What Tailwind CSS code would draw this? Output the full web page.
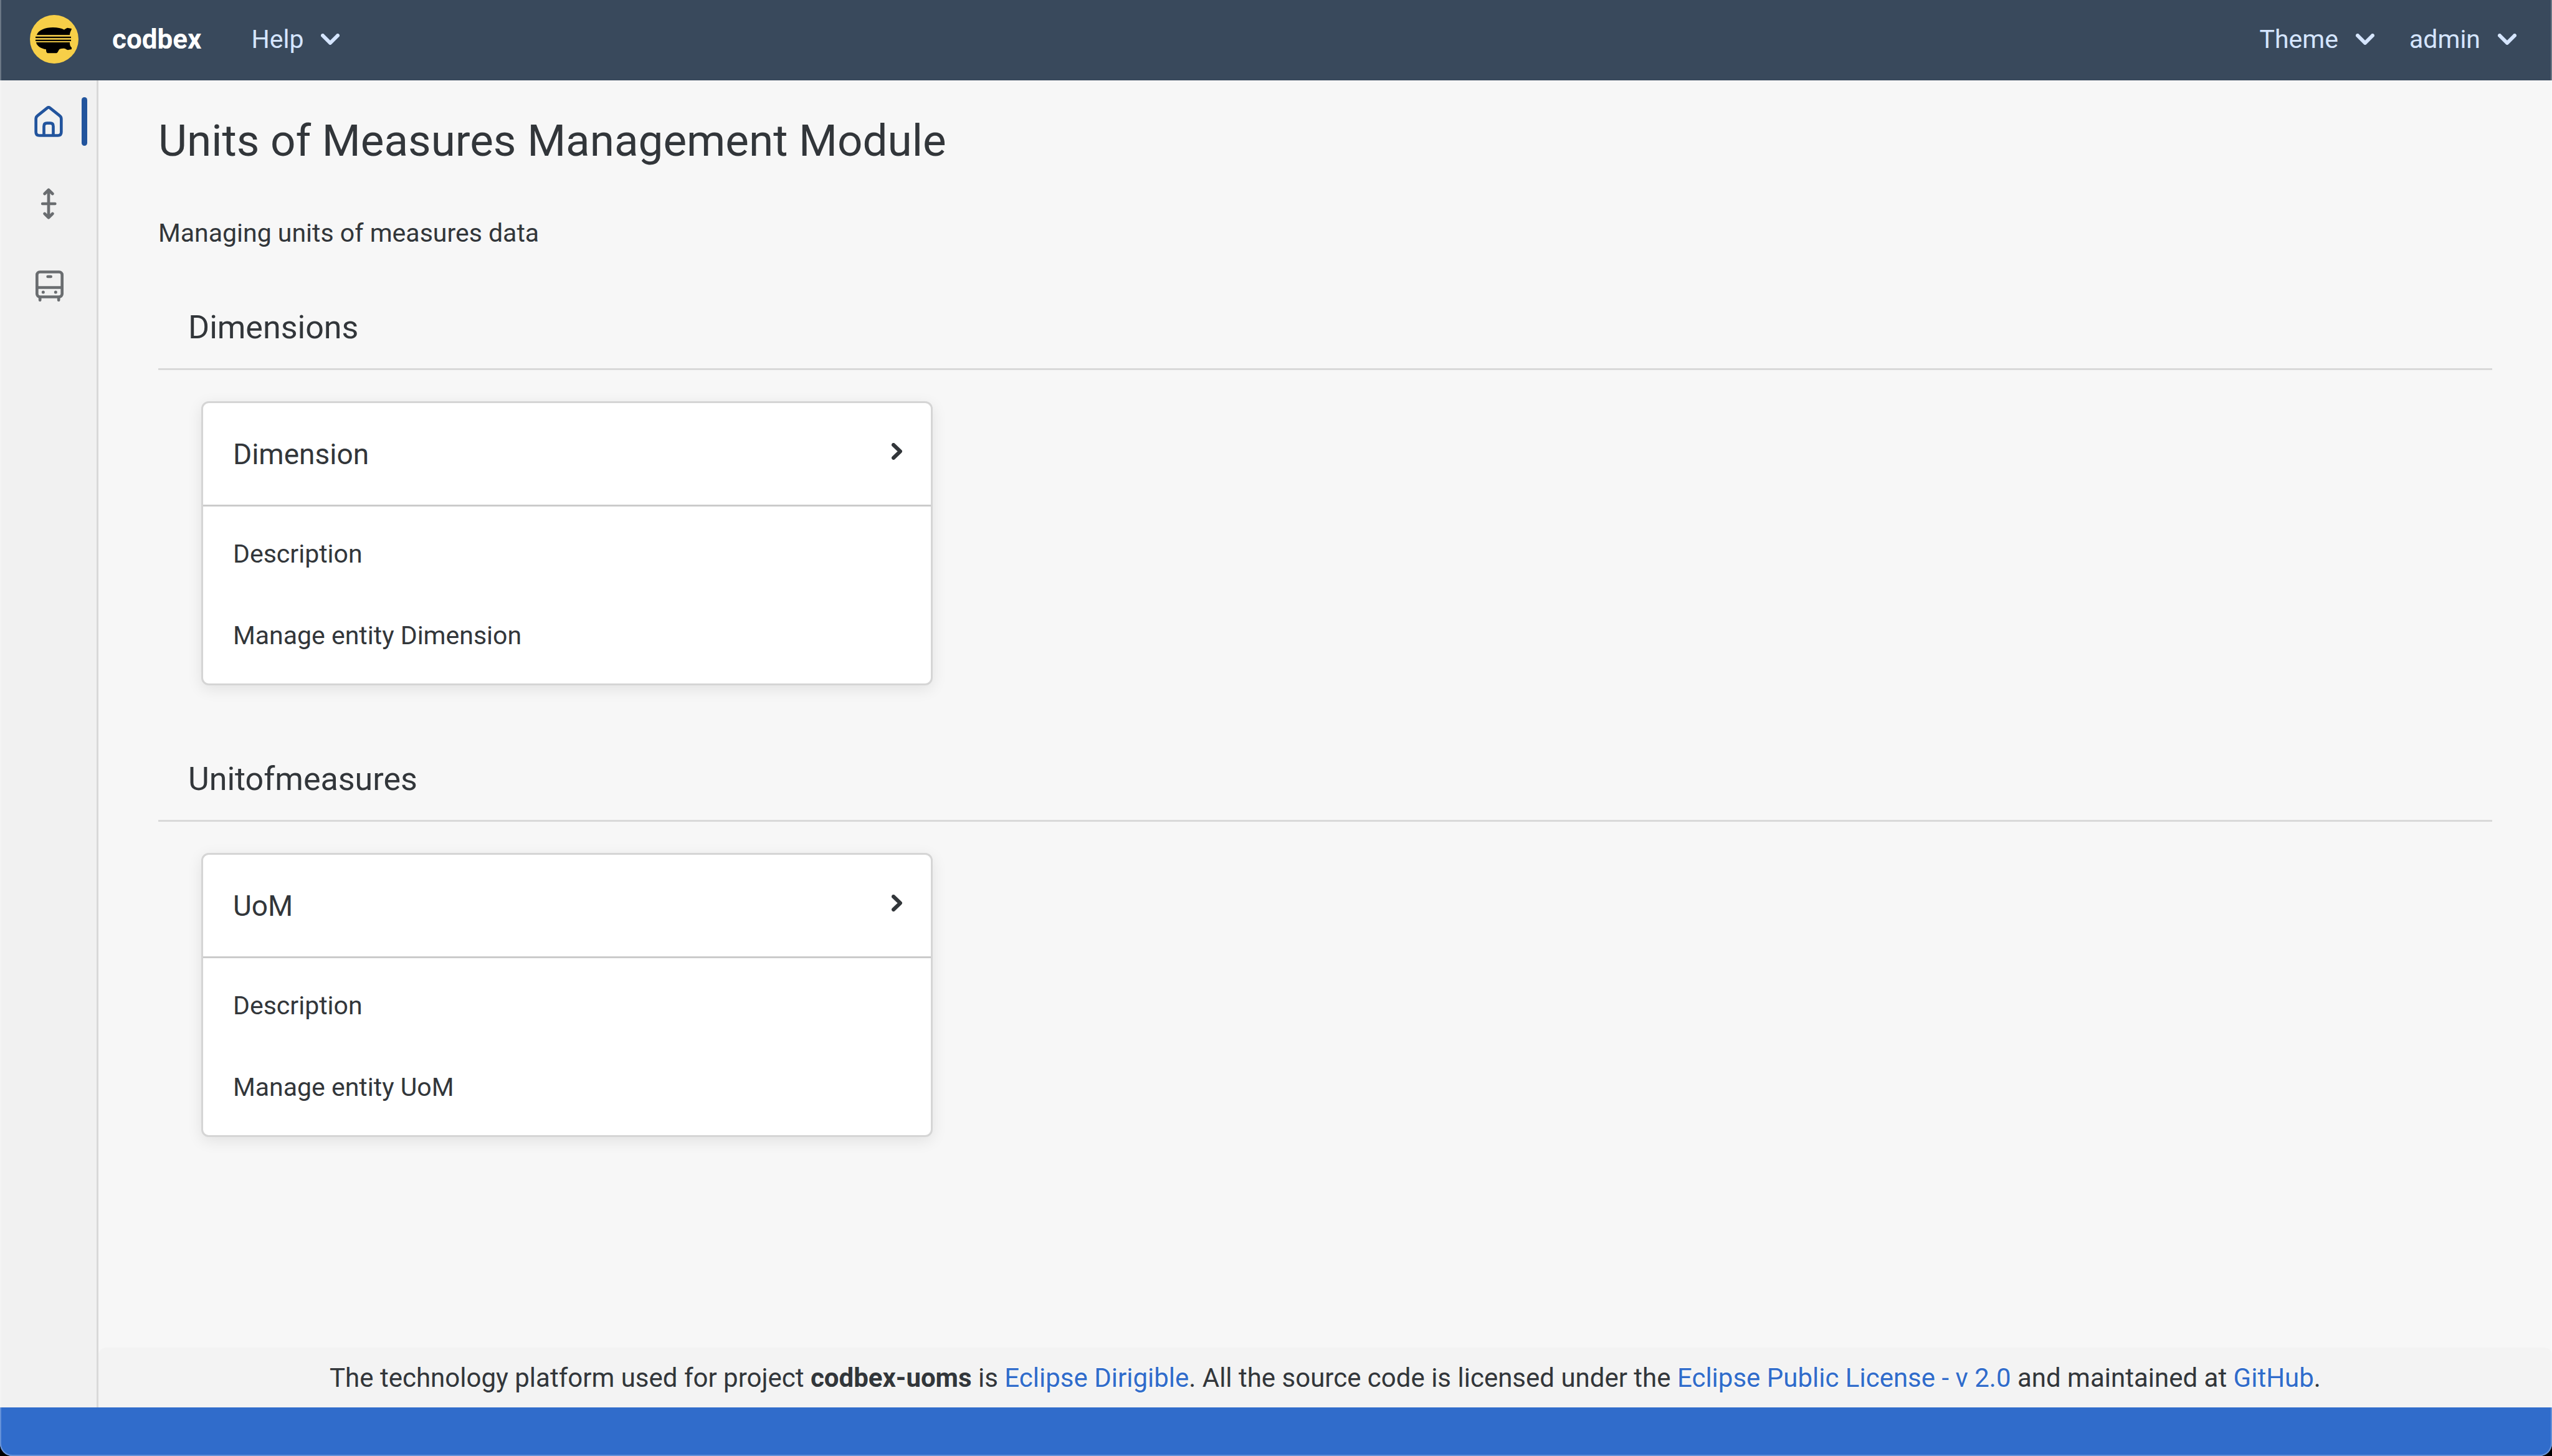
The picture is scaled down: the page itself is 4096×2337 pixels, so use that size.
<!DOCTYPE html>
<html lang="en">
<head>
<meta charset="utf-8">
<meta name="viewport" content="width=device-width, initial-scale=1">
<title>Units of Measures Management Module</title>
<script src="https://cdn.jsdelivr.net/npm/@tailwindcss/browser@4"></script>
</head>
<body class="bg-black font-['Roboto',sans-serif] text-[41px] leading-[60px] text-[#32363a]">
<div class="relative flex min-h-screen flex-col overflow-hidden rounded-b-[20px] bg-[#f7f7f7]">

  <!-- Shell bar -->
  <header class="flex h-[129px] shrink-0 items-center justify-between bg-[#39495c] pr-[57px] pb-[3px] pl-12 text-[#d5e5ff]">
    <div class="flex items-center gap-20">
      <a href="#" class="flex items-center gap-[54px]">
        <svg class="size-[78px]" viewBox="24 30 234 234" role="img" aria-label="codbex logo">
          <circle cx="141" cy="147" r="117" fill="#f7cf48"/>
          <path d="M57 126C63 104 98 90 135 90C158 90 175 94 189 101C195 97 199 93 205 92L225 96C224 104 217 110 216 126Z"/>
          <path d="M51 134.500H222V141H51ZM51 149.500H222V156H51Z"/>
          <path d="M55 128.500H216M52 145.500H221M55 159.500H216" stroke="#8a7434" stroke-width="1" fill="none"/>
          <path d="M54 162H216C216 178 219 182 225 187V195L207 199C199 197 195 191 187 191C177 192 168 191 164 198C160 204 158 212 152 213.500H109C103 212 102 206 102 196C78 192 57 180 54 162Z"/>
        </svg>
        <span class="text-[44px] font-bold text-white">codbex</span>
      </a>
      <button type="button" class="flex items-center gap-7">Help
        <svg class="h-[18px] w-[30px]" viewBox="0 0 30 18" fill="none" stroke="currentColor" stroke-width="6" stroke-linecap="round" stroke-linejoin="round"><path d="M3 3L15 15L27 3"/></svg>
      </button>
    </div>
    <div class="flex items-center gap-14">
      <button type="button" class="flex items-center gap-7">Theme
        <svg class="h-[18px] w-[30px]" viewBox="0 0 30 18" fill="none" stroke="currentColor" stroke-width="6" stroke-linecap="round" stroke-linejoin="round"><path d="M3 3L15 15L27 3"/></svg>
      </button>
      <button type="button" class="flex items-center gap-7">admin
        <svg class="h-[18px] w-[30px]" viewBox="0 0 30 18" fill="none" stroke="currentColor" stroke-width="6" stroke-linecap="round" stroke-linejoin="round"><path d="M3 3L15 15L27 3"/></svg>
      </button>
    </div>
  </header>

  <div class="flex grow">
    <!-- Side navigation -->
    <nav class="w-[158px] shrink-0 border-r-[3px] border-[#d9d9d9] bg-[#f1f1f1] text-[#6a6d70]" aria-label="Main">
      <a href="#" aria-label="Home" aria-current="page" class="relative flex h-[132px] items-center justify-center text-[#22549d]">
        <svg class="size-[50px]" viewBox="39 93 150 150" fill="none" stroke="currentColor" stroke-width="14" stroke-linecap="round" stroke-linejoin="round">
          <path d="M107 103Q114 97 121 103L167 140Q175 146 175 155V219Q175 235.500 159 235.500H69Q53 235.500 53 219V155Q53 146 61 140Z"/>
          <path d="M91.500 234V191Q91.500 176 106 176H122Q136.500 176 136.500 191V234"/>
        </svg>
        <span class="absolute right-[15px] h-[78px] w-[9px] rounded-full bg-[#22549d]"></span>
      </a>
      <a href="#" aria-label="Dimensions" class="flex h-[132px] items-center justify-center">
        <svg class="size-[50px]" viewBox="39 489 150 150" fill="none" stroke="currentColor" stroke-width="14" stroke-linecap="round" stroke-linejoin="round">
          <path d="M114 500V628M84.500 564H145M95 516L114 497L133 516M95 612L114 631L133 612"/>
          <path d="M106 503L114 496L122 503ZM106 625L114 632L122 625Z" fill="currentColor" stroke="none"/>
        </svg>
      </a>
      <a href="#" aria-label="Unitofmeasures" class="flex h-[132px] items-center justify-center">
        <svg class="size-[50px]" viewBox="39 885 150 150" fill="none" stroke="currentColor" stroke-width="14" stroke-linecap="round" stroke-linejoin="round">
          <rect x="58" y="892.500" width="121" height="120" rx="14"/>
          <path d="M58 967.500H179M72.500 1014V1028M162.500 1014V1028M110 915H125"/>
          <circle cx="88" cy="990" r="7.500" fill="currentColor" stroke="none"/>
          <circle cx="148" cy="990" r="7.500" fill="currentColor" stroke="none"/>
        </svg>
      </a>
    </nav>

    <div class="flex grow flex-col">
      <main class="grow px-24 pt-[57px]">
        <h1 class="text-[71px] leading-[80px]">Units of Measures Management Module</h1>
        <p class="mt-[78px]">Managing units of measures data</p>

        <section class="mt-[92px]">
          <h2 class="border-b-[3px] border-[#d9d9d9] pb-[35px] pl-12 text-[52px]">Dimensions</h2>
          <article class="mt-[50px] ml-[69px] w-[1174px] max-w-full rounded-[12px] border-[3px] border-[#d5d5d5] bg-white shadow-[0_6px_24px_rgba(0,0,0,0.09)]">
            <a href="#" class="flex h-[166px] items-center justify-between border-b-[3px] border-[#cbcbcb] pr-[46px] pl-12">
              <h3 class="text-[46px]">Dimension</h3>
              <svg class="mb-2 h-[27px] w-[17px]" viewBox="0 0 17 27" fill="none" stroke="currentColor" stroke-width="6" stroke-linecap="round" stroke-linejoin="round"><path d="M3 3L14 13.500L3 24"/></svg>
            </a>
            <div class="flex flex-col gap-[71px] px-12 pt-[46px] pb-[47px]">
              <p>Description</p>
              <p>Manage entity Dimension</p>
            </div>
          </article>
        </section>

        <section class="mt-[121px]">
          <h2 class="border-b-[3px] border-[#d9d9d9] pb-[35px] pl-12 text-[52px]">Unitofmeasures</h2>
          <article class="mt-[50px] ml-[69px] w-[1174px] max-w-full rounded-[12px] border-[3px] border-[#d5d5d5] bg-white shadow-[0_6px_24px_rgba(0,0,0,0.09)]">
            <a href="#" class="flex h-[166px] items-center justify-between border-b-[3px] border-[#cbcbcb] pr-[46px] pl-12">
              <h3 class="text-[46px]">UoM</h3>
              <svg class="mb-2 h-[27px] w-[17px]" viewBox="0 0 17 27" fill="none" stroke="currentColor" stroke-width="6" stroke-linecap="round" stroke-linejoin="round"><path d="M3 3L14 13.500L3 24"/></svg>
            </a>
            <div class="flex flex-col gap-[71px] px-12 pt-[46px] pb-[47px]">
              <p>Description</p>
              <p>Manage entity UoM</p>
            </div>
          </article>
        </section>
      </main>

      <footer class="rounded-t-[12px] bg-[#f3f3f3] pt-[19px] pb-[17px] text-center text-[42px]">
        The technology platform used for project <b class="font-bold">codbex-uoms</b> is <a href="#" class="text-[#306ccb] text-shadow-[0_0_4px_#ffffff]">Eclipse Dirigible</a>. All the source code is licensed under the <a href="#" class="text-[#306ccb] text-shadow-[0_0_4px_#ffffff]">Eclipse Public License - v 2.0</a> and maintained at <a href="#" class="text-[#306ccb] text-shadow-[0_0_4px_#ffffff]">GitHub</a>.
      </footer>
    </div>
  </div>

  <!-- Status bar -->
  <div class="h-[78px] shrink-0 bg-[#306ccb]"></div>

  <!-- Window edge highlight -->
  <div class="pointer-events-none absolute inset-0 rounded-b-[20px] border-x-2 border-b-2 border-white/25"></div>
</div>
</body>
</html>
